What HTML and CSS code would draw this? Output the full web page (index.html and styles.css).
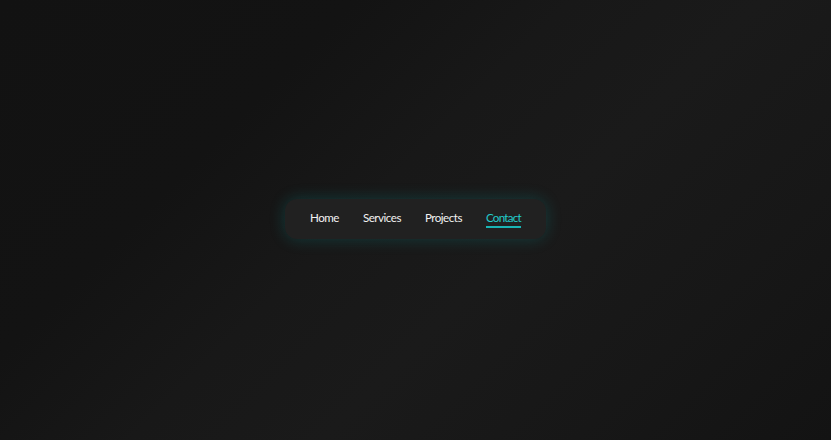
FILE: index.html
```html
<!DOCTYPE html>
<html lang="en">
<head>
<meta charset="utf-8">
<title>Nav</title>
<link rel="stylesheet" href="styles.css">
</head>
<body>
<main class="stage">
  <nav class="nav">
    <a class="nav-link" href="#">Home</a>
    <a class="nav-link" href="#">Services</a>
    <a class="nav-link" href="#">Projects</a>
    <a class="nav-link is-active" href="#">Contact</a>
  </nav>
</main>
</body>
</html>
```

FILE: styles.css
```css
html, body {
  margin: 0;
  height: 100%;
}
body {
  background: linear-gradient(135deg, #121212 0%, #131313 28%, #181818 45%, #1a1a1a 60%, #171717 80%, #131313 100%);
  font-family: Lato, "Noto Sans", sans-serif;
}
.stage {
  height: 100%;
  display: flex;
  align-items: center;
  justify-content: center;
  padding-bottom: 2px;
  box-sizing: border-box;
}
.nav {
  display: flex;
  align-items: center;
  gap: 24px;
  height: 40px;
  padding: 0 25px 2px;
  box-sizing: border-box;
  background: #212121;
  border-radius: 12px;
  box-shadow: 0 0 16px rgba(0, 175, 175, 0.24);
}
.nav-link {
  position: relative;
  color: #f2f2f2;
  text-decoration: none;
  font-size: 11.6px;
  line-height: 14px;
  letter-spacing: -0.5px;
}
.nav-link.is-active {
  color: #22cccc;
  letter-spacing: -0.75px;
}
.nav-link.is-active::after {
  content: "";
  position: absolute;
  left: 0;
  right: 0;
  bottom: -3px;
  height: 2px;
  background: #1ab5b5;
}
```
